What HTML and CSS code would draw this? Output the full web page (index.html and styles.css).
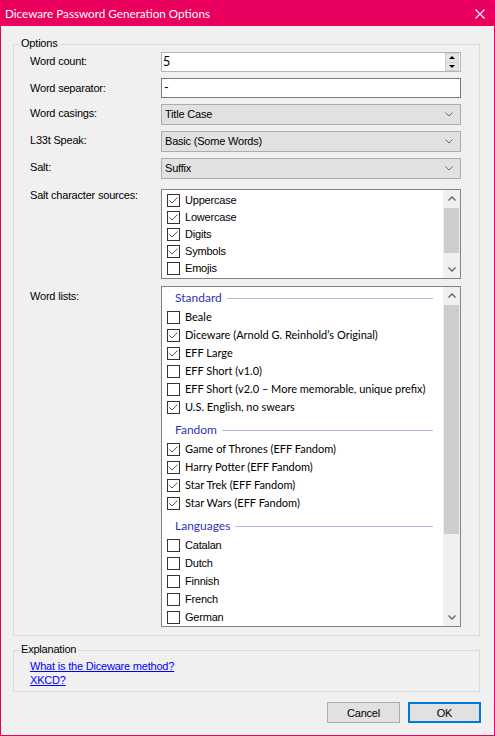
FILE: index.html
```html
<!DOCTYPE html>
<html>
<head>
<meta charset="utf-8">
<link rel="stylesheet" href="styles.css">
</head>
<body>
<div class="window">
  <div class="titlebar">
    <span class="title">Diceware Password Generation Options</span>
    <svg class="close" width="10" height="10" viewBox="0 0 10 10"><path d="M0.5 0.5L9.5 9.5M9.5 0.5L0.5 9.5" stroke="#fff" stroke-width="1.1"/></svg>
  </div>
  <div class="content">
    <div class="group options">
      <span class="legend">Options</span>
      <div class="form">
        <div class="lbl">Word count:</div>
        <div class="numeric ctl">
          <span class="val">5</span>
          <div class="spin"><div class="sb"><span class="tri-up"></span></div><div class="sb"><span class="tri-down"></span></div></div>
        </div>

        <div class="lbl l4">Word separator:</div>
        <div class="textbox ctl"><span class="val">-</span></div>

        <div class="lbl">Word casings:</div>
        <div class="select ctl"><span>Title Case</span><svg class="chev" width="8" height="5" viewBox="0 0 8 5"><path d="M0.5 0.5L4 4L7.5 0.5" fill="none" stroke="#6d6d6d"/></svg></div>

        <div class="lbl">L33t Speak:</div>
        <div class="select ctl"><span>Basic (Some Words)</span><svg class="chev" width="8" height="5" viewBox="0 0 8 5"><path d="M0.5 0.5L4 4L7.5 0.5" fill="none" stroke="#6d6d6d"/></svg></div>

        <div class="lbl">Salt:</div>
        <div class="select ctl last"><span>Suffix</span><svg class="chev" width="8" height="5" viewBox="0 0 8 5"><path d="M0.5 0.5L4 4L7.5 0.5" fill="none" stroke="#6d6d6d"/></svg></div>

        <div class="lbl l0">Salt character sources:</div>
        <div class="listbox salt ctl">
          <div class="items">
            <div class="row"><svg class="cb" viewBox="0 0 13 13"><rect x="0.5" y="0.5" width="12" height="12" fill="#fff" stroke="#333"/><path d="M2.5 6.5L5 9L10.5 3.5" fill="none" stroke="#555"/></svg><span>Uppercase</span></div>
            <div class="row"><svg class="cb" viewBox="0 0 13 13"><rect x="0.5" y="0.5" width="12" height="12" fill="#fff" stroke="#333"/><path d="M2.5 6.5L5 9L10.5 3.5" fill="none" stroke="#555"/></svg><span>Lowercase</span></div>
            <div class="row"><svg class="cb" viewBox="0 0 13 13"><rect x="0.5" y="0.5" width="12" height="12" fill="#fff" stroke="#333"/><path d="M2.5 6.5L5 9L10.5 3.5" fill="none" stroke="#555"/></svg><span>Digits</span></div>
            <div class="row"><svg class="cb" viewBox="0 0 13 13"><rect x="0.5" y="0.5" width="12" height="12" fill="#fff" stroke="#333"/><path d="M2.5 6.5L5 9L10.5 3.5" fill="none" stroke="#555"/></svg><span>Symbols</span></div>
            <div class="row"><svg class="cb" viewBox="0 0 13 13"><rect x="0.5" y="0.5" width="12" height="12" fill="#fff" stroke="#333"/></svg><span>Emojis</span></div>
          </div>
          <div class="scrollbar">
            <div class="arrow"><svg width="8" height="5" viewBox="0 0 8 5"><path d="M0.5 4.5L4 1L7.5 4.5" fill="none" stroke="#606060" stroke-width="1.3"/></svg></div>
            <div class="thumb salt-thumb"></div>
            <div class="track"></div>
            <div class="arrow"><svg width="8" height="5" viewBox="0 0 8 5"><path d="M0.5 0.5L4 4L7.5 0.5" fill="none" stroke="#606060" stroke-width="1.3"/></svg></div>
          </div>
        </div>

        <div class="lbl l45">Word lists:</div>
        <div class="listbox words ctl">
          <div class="items witems">
            <div class="ghead first"><span>Standard</span><i class="gline"></i></div>
            <div class="wrow"><svg class="cb" viewBox="0 0 13 13"><rect x="0.5" y="0.5" width="12" height="12" fill="#fff" stroke="#333"/></svg><span>Beale</span></div>
            <div class="wrow"><svg class="cb" viewBox="0 0 13 13"><rect x="0.5" y="0.5" width="12" height="12" fill="#fff" stroke="#333"/><path d="M2.5 6.5L5 9L10.5 3.5" fill="none" stroke="#555"/></svg><span>Diceware (Arnold G. Reinhold’s Original)</span></div>
            <div class="wrow"><svg class="cb" viewBox="0 0 13 13"><rect x="0.5" y="0.5" width="12" height="12" fill="#fff" stroke="#333"/><path d="M2.5 6.5L5 9L10.5 3.5" fill="none" stroke="#555"/></svg><span>EFF Large</span></div>
            <div class="wrow"><svg class="cb" viewBox="0 0 13 13"><rect x="0.5" y="0.5" width="12" height="12" fill="#fff" stroke="#333"/></svg><span>EFF Short (v1.0)</span></div>
            <div class="wrow"><svg class="cb" viewBox="0 0 13 13"><rect x="0.5" y="0.5" width="12" height="12" fill="#fff" stroke="#333"/></svg><span>EFF Short (v2.0 – More memorable, unique prefix)</span></div>
            <div class="wrow"><svg class="cb" viewBox="0 0 13 13"><rect x="0.5" y="0.5" width="12" height="12" fill="#fff" stroke="#333"/><path d="M2.5 6.5L5 9L10.5 3.5" fill="none" stroke="#555"/></svg><span>U.S. English, no swears</span></div>
            <div class="ghead"><span>Fandom</span><i class="gline"></i></div>
            <div class="wrow"><svg class="cb" viewBox="0 0 13 13"><rect x="0.5" y="0.5" width="12" height="12" fill="#fff" stroke="#333"/><path d="M2.5 6.5L5 9L10.5 3.5" fill="none" stroke="#555"/></svg><span>Game of Thrones (EFF Fandom)</span></div>
            <div class="wrow"><svg class="cb" viewBox="0 0 13 13"><rect x="0.5" y="0.5" width="12" height="12" fill="#fff" stroke="#333"/><path d="M2.5 6.5L5 9L10.5 3.5" fill="none" stroke="#555"/></svg><span>Harry Potter (EFF Fandom)</span></div>
            <div class="wrow"><svg class="cb" viewBox="0 0 13 13"><rect x="0.5" y="0.5" width="12" height="12" fill="#fff" stroke="#333"/><path d="M2.5 6.5L5 9L10.5 3.5" fill="none" stroke="#555"/></svg><span>Star Trek (EFF Fandom)</span></div>
            <div class="wrow"><svg class="cb" viewBox="0 0 13 13"><rect x="0.5" y="0.5" width="12" height="12" fill="#fff" stroke="#333"/><path d="M2.5 6.5L5 9L10.5 3.5" fill="none" stroke="#555"/></svg><span>Star Wars (EFF Fandom)</span></div>
            <div class="ghead"><span>Languages</span><i class="gline"></i></div>
            <div class="wrow"><svg class="cb" viewBox="0 0 13 13"><rect x="0.5" y="0.5" width="12" height="12" fill="#fff" stroke="#333"/></svg><span class="ms">Catalan</span></div>
            <div class="wrow"><svg class="cb" viewBox="0 0 13 13"><rect x="0.5" y="0.5" width="12" height="12" fill="#fff" stroke="#333"/></svg><span class="ms">Dutch</span></div>
            <div class="wrow"><svg class="cb" viewBox="0 0 13 13"><rect x="0.5" y="0.5" width="12" height="12" fill="#fff" stroke="#333"/></svg><span class="ms">Finnish</span></div>
            <div class="wrow"><svg class="cb" viewBox="0 0 13 13"><rect x="0.5" y="0.5" width="12" height="12" fill="#fff" stroke="#333"/></svg><span class="ms">French</span></div>
            <div class="wrow"><svg class="cb" viewBox="0 0 13 13"><rect x="0.5" y="0.5" width="12" height="12" fill="#fff" stroke="#333"/></svg><span class="ms">German</span></div>
          </div>
          <div class="scrollbar">
            <div class="arrow"><svg width="8" height="5" viewBox="0 0 8 5"><path d="M0.5 4.5L4 1L7.5 4.5" fill="none" stroke="#606060" stroke-width="1.3"/></svg></div>
            <div class="thumb words-thumb"></div>
            <div class="track"></div>
            <div class="arrow"><svg width="8" height="5" viewBox="0 0 8 5"><path d="M0.5 0.5L4 4L7.5 0.5" fill="none" stroke="#606060" stroke-width="1.3"/></svg></div>
          </div>
        </div>
      </div>
    </div>

    <div class="group explanation">
      <span class="legend">Explanation</span>
      <a class="link" href="#">What is the Diceware method?</a>
      <a class="link" href="#">XKCD?</a>
    </div>

    <div class="buttons">
      <button class="btn">Cancel</button>
      <button class="btn ok">OK</button>
    </div>
  </div>
</div>
</body>
</html>
```

FILE: styles.css
```css
* {
  box-sizing: border-box;
  margin: 0;
  padding: 0;
}

html, body {
  width: 495px;
  height: 736px;
  overflow: hidden;
  background: #f0f0f0;
}

body {
  font-family: "Liberation Sans", Arial, sans-serif;
  font-size: 11px;
  color: #000;
}

.window {
  width: 495px;
  height: 736px;
  border: 1px solid #ea005e;
  border-top: 0;
  background: #f0f0f0;
  display: flex;
  flex-direction: column;
}

.titlebar {
  height: 26px;
  flex: none;
  background: #ea005e;
  color: #fff;
  display: flex;
  align-items: center;
  justify-content: space-between;
  padding: 0 9px 0 4px;
  font-family: Lato, "Noto Sans", sans-serif;
  font-size: 11.7px;
}

.title {
  line-height: 16px;
}

.close {
  display: block;
  margin-top: 1px;
}

.content {
  padding: 18px 14px 0 12px;
  display: flex;
  flex-direction: column;
}

.group {
  border: 1px solid #dcdcdc;
  position: relative;
}

.legend {
  position: absolute;
  top: -8px;
  left: 5px;
  padding: 0 2px;
  background: #f0f0f0;
  line-height: 13px;
  letter-spacing: -0.2px;
}

.options {
  padding: 7px 17px 8px 16px;
}

.form {
  display: grid;
  grid-template-columns: 131px 300px;
  align-items: start;
}

.lbl {
  padding-top: 3px;
  line-height: 13px;
  letter-spacing: -0.2px;
  white-space: nowrap;
}

.lbl.l4 { padding-top: 4px; }
.lbl.l0 { padding-top: 0; }
.lbl.l45 { padding-top: 4px; }

.ctl {
  margin-bottom: 6px;
}

.numeric, .textbox {
  height: 20px;
  background: #fff;
  display: flex;
  align-items: center;
}

.numeric {
  border: 1px solid #b4b4b4;
}

.textbox {
  border: 1px solid #7a7a7a;
}

.val {
  flex: 1;
  padding-left: 1px;
  font-family: Lato, "Noto Sans", sans-serif;
  font-size: 12.5px;
  line-height: 16px;
}

.textbox .val {
  padding-left: 2px;
}

.spin {
  width: 14px;
  height: 18px;
  margin-right: 1px;
  display: flex;
  flex-direction: column;
}

.sb {
  flex: 1;
  background: #e6e6e6;
  border: 1px solid #cfcfcf;
  display: flex;
  align-items: center;
  justify-content: center;
}

.sb + .sb {
  border-top: 0;
}

.tri-up {
  width: 0;
  height: 0;
  border-left: 3px solid transparent;
  border-right: 3px solid transparent;
  border-bottom: 3px solid #000;
}

.tri-down {
  width: 0;
  height: 0;
  border-left: 3px solid transparent;
  border-right: 3px solid transparent;
  border-top: 3px solid #000;
}

.select {
  height: 21px;
  border: 1px solid #adadad;
  background: #e1e1e1;
  display: flex;
  align-items: center;
  justify-content: space-between;
  padding: 0 7px 0 3px;
  line-height: 13px;
  letter-spacing: -0.2px;
}

.select.last {
  margin-bottom: 10px;
}

.chev {
  display: block;
}

.listbox {
  border: 1px solid #828282;
  background: #fff;
  display: flex;
}

.listbox.salt {
  height: 90px;
  margin-bottom: 7px;
}

.listbox.words {
  height: 341px;
  margin-bottom: 0;
}

.items {
  flex: 1;
  padding: 2px 0 0 5px;
  overflow: hidden;
}

.row {
  height: 17px;
  display: flex;
  align-items: center;
  gap: 5px;
  line-height: 13px;
  letter-spacing: -0.2px;
}

.cb {
  width: 13px;
  height: 13px;
  flex: none;
  display: block;
}

.scrollbar {
  width: 17px;
  flex: none;
  background: #f0f0f0;
  display: flex;
  flex-direction: column;
}

.arrow {
  height: 17px;
  flex: none;
  display: flex;
  align-items: center;
  justify-content: center;
}

.arrow svg {
  display: block;
}

.thumb {
  margin: 1px 1px 0 1px;
  background: #cdcdcd;
  flex: none;
}

.salt-thumb {
  height: 45px;
}

.words-thumb {
  height: 229px;
}

.track {
  flex: 1;
}

.witems {
  padding-top: 1px;
  font-family: Lato, "Noto Sans", sans-serif;
  font-size: 11px;
}

.wrow {
  height: 18px;
  display: flex;
  align-items: center;
  gap: 5px;
  line-height: 14px;
  white-space: nowrap;
}

.wrow .ms {
  font-family: "Liberation Sans", Arial, sans-serif;
  font-size: 11px;
  letter-spacing: -0.2px;
}

.ghead {
  height: 24px;
  padding: 7px 10px 3px 8px;
  display: flex;
  align-items: center;
  color: #3232b4;
  font-size: 12px;
  line-height: 14px;
}

.ghead.first {
  height: 20px;
  padding-top: 3px;
}

.gline {
  flex: 1;
  height: 1px;
  margin-left: 5px;
  background: #b3bbdf;
}

.explanation {
  margin-top: 14px;
  padding: 8px 16px 4px 16px;
  display: flex;
  flex-direction: column;
  align-items: flex-start;
}

.link {
  color: #0000ff;
  text-decoration: underline;
  line-height: 14px;
  letter-spacing: -0.2px;
}

.buttons {
  margin-top: 10px;
  margin-right: -1px;
  display: flex;
  justify-content: flex-end;
  gap: 8px;
}

.btn {
  width: 73px;
  height: 21px;
  border: 1px solid #adadad;
  background: #e1e1e1;
  font-family: "Liberation Sans", Arial, sans-serif;
  font-size: 11px;
  color: #000;
  letter-spacing: -0.2px;
}

.btn.ok {
  border: 2px solid #0078d7;
}
```
